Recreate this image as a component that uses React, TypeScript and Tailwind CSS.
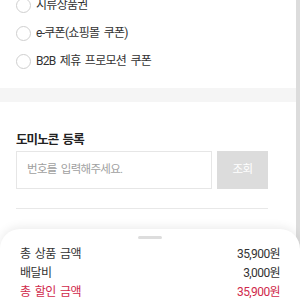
import React from "react";

const font = { fontFamily: 'Roboto, "Noto Sans CJK KR", sans-serif' };

function Radio({ label }: { label: string }) {
  return (
    <div className="flex items-center h-[28px] pl-[16px] gap-[5px]">
      <span className="w-[15px] h-[15px] rounded-full border border-[#cfcfcf] bg-white shrink-0" />
      <span className="text-[12px] text-[#333] leading-none tracking-[-0.7px] [word-spacing:2px]">{label}</span>
    </div>
  );
}

function Row({ label, value, red }: { label: string; value: string; red?: boolean }) {
  return (
    <div className={`flex justify-between items-center h-[19px] text-[12px] tracking-[-0.6px] [word-spacing:2px] ${red ? "text-[#d0294b]" : "text-[#333]"}`}>
      <span>{label}</span>
      <span>{value}</span>
    </div>
  );
}

export default function App() {
  return (
    <div className="relative w-[300px] h-[300px] overflow-hidden bg-white flex" style={font}>
      <div className="flex-1 flex flex-col">
        <div className="mt-[-9px] flex flex-col">
          <Radio label="지류상품권" />
          <Radio label="e-쿠폰(쇼핑몰 쿠폰)" />
          <Radio label="B2B 제휴 프로모션 쿠폰" />
        </div>
        <div className="mt-[13px] h-[14px] bg-[#f5f5f5]" />
        <div className="px-[16px] pt-[28px]">
          <div className="text-[12.5px] font-bold text-[#222] leading-[20px] tracking-[-0.9px] [word-spacing:2px]">도미노콘 등록</div>
          <div className="flex mt-[1px] gap-[5px] pr-[12px]">
            <div className="flex-1 h-[38px] border border-[#e6e6e6] flex items-center pl-[10px] text-[11.5px] text-[#a0a0a0] tracking-[-0.7px] [word-spacing:2px]">
              번호를 입력해주세요.
            </div>
            <div className="w-[51px] h-[38px] bg-[#dcdcdc] flex items-center justify-center text-[11.5px] text-white tracking-[-0.5px]">
              조회
            </div>
          </div>
          <div className="mt-[19px] mr-[12px] h-px bg-[#e8e8e8]" />
        </div>
      </div>
      <div className="w-[4px] bg-[#dcdcdc]" />
      <div className="absolute left-0 right-0 top-[229px] bottom-0 bg-white rounded-t-[20px] shadow-[0_-2px_10px_rgba(0,0,0,0.08)] px-[20px] pt-[7px]">
        <div className="mx-auto w-[24px] h-[3px] rounded-full bg-[#dddddd]" />
        <div className="mt-[5px] flex flex-col">
          <Row label="총 상품 금액" value="35,900원" />
          <Row label="배달비" value="3,000원" />
          <Row label="총 할인 금액" value="35,900원" red />
        </div>
      </div>
    </div>
  );
}
